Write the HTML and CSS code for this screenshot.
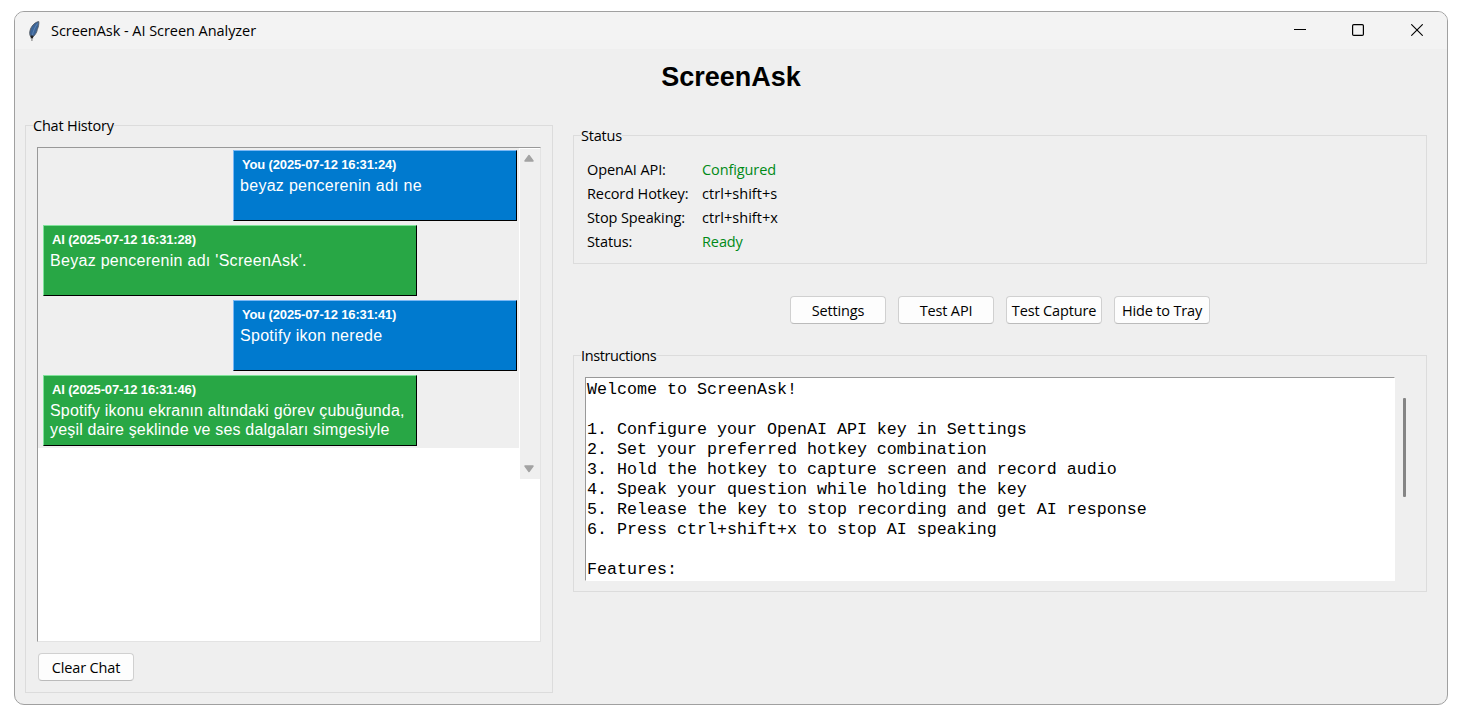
FILE: index.html
```
<!DOCTYPE html>
<html lang="en">
<head>
<meta charset="utf-8">
<title>ScreenAsk - AI Screen Analyzer</title>
<link rel="stylesheet" href="styles.css">
</head>
<body>
<div class="window">
  <header class="titlebar">
    <svg class="feather" width="12" height="20" viewBox="0 0 12 20">
      <path d="M10.800 .6C7.500 1 4.200 4 2.500 8 1.300 11 1.300 14 3 16L5 16C7.500 13.500 9 11 9.300 8.500 10.500 6 11 3 10.800 .6Z" fill="#3c6598" stroke="#555b63" stroke-width=".9"/>
      <path d="M9.500 2.500C7 6 5 10 4 16" fill="none" stroke="#7fa3cc" stroke-width=".5"/>
      <path d="M3.900 14.500V17.500" stroke="#222" stroke-width="2.400"/>
      <path d="M3.900 17.500V20" stroke="#999" stroke-width="1.400"/>
    </svg>
    <span class="title">ScreenAsk - AI Screen Analyzer</span>
    <div class="controls">
      <svg width="12" height="12" viewBox="0 0 12 12"><path d="M0 5.500H12" stroke="#000"/></svg>
      <svg width="12" height="12" viewBox="0 0 12 12"><rect x=".6" y=".6" width="10.800" height="10.800" rx="1.200" fill="none" stroke="#000" stroke-width="1.200"/></svg>
      <svg width="12" height="12" viewBox="0 0 12 12"><path d="M.3.3 11.700 11.700M11.700.3.3 11.700" stroke="#000" stroke-width="1.100"/></svg>
    </div>
  </header>

  <h1>ScreenAsk</h1>

  <main class="columns">
    <fieldset class="group chat">
      <legend>Chat History</legend>
      <div class="chat-view">
        <div class="messages">
          <article class="bubble you"><h2>You (2025-07-12 16:31:24)</h2><p>beyaz pencerenin adı ne</p></article>
          <article class="bubble ai"><h2>AI (2025-07-12 16:31:28)</h2><p>Beyaz pencerenin adı 'ScreenAsk'.</p></article>
          <article class="bubble you"><h2>You (2025-07-12 16:31:41)</h2><p>Spotify ikon nerede</p></article>
          <article class="bubble ai long"><h2>AI (2025-07-12 16:31:46)</h2><p>Spotify ikonu ekranın altındaki görev çubuğunda,<br>yeşil daire şeklinde ve ses dalgaları simgesiyle</p></article>
        </div>
        <div class="scrollbar">
          <svg width="10" height="8" viewBox="0 0 10 8"><path d="M5 1.500 9 7H1Z" fill="#a3a3a3" stroke="#a3a3a3" stroke-width="1.500" stroke-linejoin="round"/></svg>
          <svg width="10" height="8" viewBox="0 0 10 8"><path d="M5 6.500 9 1H1Z" fill="#a3a3a3" stroke="#a3a3a3" stroke-width="1.500" stroke-linejoin="round"/></svg>
        </div>
      </div>
      <button>Clear Chat</button>
    </fieldset>

    <div class="side">
      <fieldset class="group status">
        <legend>Status</legend>
        <dl>
          <dt>OpenAI API:</dt><dd class="ok">Configured</dd>
          <dt>Record Hotkey:</dt><dd class="hotkey">ctrl+shift+s</dd>
          <dt>Stop Speaking:</dt><dd class="hotkey">ctrl+shift+x</dd>
          <dt>Status:</dt><dd class="ok">Ready</dd>
        </dl>
      </fieldset>
      <div class="actions">
        <button>Settings</button>
        <button>Test API</button>
        <button>Test Capture</button>
        <button>Hide to Tray</button>
      </div>
      <fieldset class="group instructions">
        <legend>Instructions</legend>
        <div class="text-row">
<pre>Welcome to ScreenAsk!

1. Configure your OpenAI API key in Settings
2. Set your preferred hotkey combination
3. Hold the hotkey to capture screen and record audio
4. Speak your question while holding the key
5. Release the key to stop recording and get AI response
6. Press ctrl+shift+x to stop AI speaking

Features:</pre>
          <div class="thumb"></div>
        </div>
      </fieldset>
    </div>
  </main>
</div>
</body>
</html>
```
FILE: styles.css
```
* { box-sizing: border-box; }
body {
  margin: 0;
  padding: 11px 0 0 14px;
  background: #fff;
  color: #000;
  font: 14.500px/21px "Open Sans", "Noto Sans", sans-serif;
  letter-spacing: -0.220px;
}
.window {
  width: 1434px;
  height: 694px;
  border: 1px solid #a0a0a0;
  border-radius: 10px;
  background: #efefef;
  overflow: hidden;
}
.titlebar {
  display: flex;
  align-items: center;
  height: 37px;
  padding: 0 24px 0 13px;
  background: #f3f3f3;
}
.title { margin-left: 11px; white-space: nowrap; letter-spacing: -0.050px; }
.controls { display: flex; gap: 46px; margin-left: auto; }
.controls svg { position: relative; top: -1px; }
.controls svg:last-child { margin-left: 1px; }
.controls svg, .feather { display: block; }
h1 {
  margin: 0;
  padding: 12px 0 22px;
  text-align: center;
  font: bold 27px/32px "Liberation Sans", Arial, sans-serif;
  letter-spacing: 0;
}
.columns {
  display: grid;
  grid-template-columns: 528px 854px;
  gap: 20px;
  padding-left: 10px;
  align-items: start;
}
.group {
  min-width: 0;
  margin: 0;
  border: 1px solid #dcdcdc;
  padding: 11px;
}
.group legend { height: 21px; padding: 0; margin-left: -4px; white-space: nowrap; }
.chat { height: 578px; }
.chat-view {
  display: flex;
  align-items: flex-start;
  width: 504px;
  height: 495px;
  border: 1px solid;
  border-color: #999 #e3e3e3 #e3e3e3 #999;
  background: #fff;
}
.messages {
  display: flex;
  flex-direction: column;
  gap: 4px;
  width: 481px;
  height: 300px;
  padding: 2px 2px 2px 5px;
  background: #efefef;
}
.bubble {
  height: 71px;
  border: 1px solid;
  padding: 5px 6px;
  color: #fff;
  font-family: "Liberation Sans", Arial, sans-serif;
  white-space: nowrap;
}
.you { width: 284px; align-self: flex-end; background: #007acf; border-color: #7ab8f5 #000 #000 #7ab8f5; }
.ai { width: 374px; background: #28a745; border-color: #7fe39a #000 #000 #7fe39a; }
.bubble h2 { margin: 0 0 0 2px; font-size: 13px; line-height: 18px; letter-spacing: -0.150px; }
.bubble p { margin: 2px 0 0; font-size: 16px; line-height: 19px; letter-spacing: 0.290px; }
.bubble.long p { letter-spacing: 0.180px; }
.scrollbar {
  display: flex;
  flex-direction: column;
  align-items: center;
  justify-content: space-between;
  width: 20px;
  height: 330px;
  margin: 1px 0 0 1px;
  padding: 5px 2px 6px 0;
  background: #efefef;
}
button {
  display: block;
  width: 96px;
  height: 28px;
  padding: 0;
  border: 1px solid #d0d0d0;
  border-bottom-color: #bbb;
  border-radius: 4px;
  background: #fdfdfd;
  color: #000;
  font: inherit;
  letter-spacing: -0.150px;
  white-space: nowrap;
}
.chat button { margin: 11px 0 0 1px; }
.side { padding-top: 10px; }
.status { height: 139px; padding: 12px 13px; }
.status legend { margin-left: -6px; }
.status dl {
  display: grid;
  grid-template-columns: 115px auto;
  margin: 0;
  line-height: 24px;
  letter-spacing: -0.100px;
}
.status dd { margin: 0; }
.hotkey { letter-spacing: 0.050px; }
.ok { color: #008a17; }
.actions { display: flex; justify-content: center; gap: 12px; margin: 32px 0 21px; }
.instructions { height: 247px; }
.instructions legend { letter-spacing: -0.400px; }
.text-row { display: flex; }
pre {
  width: 810px;
  height: 204px;
  margin: 0;
  padding: 2px 0 0 1px;
  overflow: hidden;
  border: 1px solid;
  border-color: #999 #fff #fff #999;
  background: #fff;
  font: 16.670px/20px "Liberation Mono", "Courier New", monospace;
  letter-spacing: 0;
}
.thumb { width: 3px; height: 99px; margin: 21px 0 0 8px; border-radius: 1px; background: #858585; }
```
